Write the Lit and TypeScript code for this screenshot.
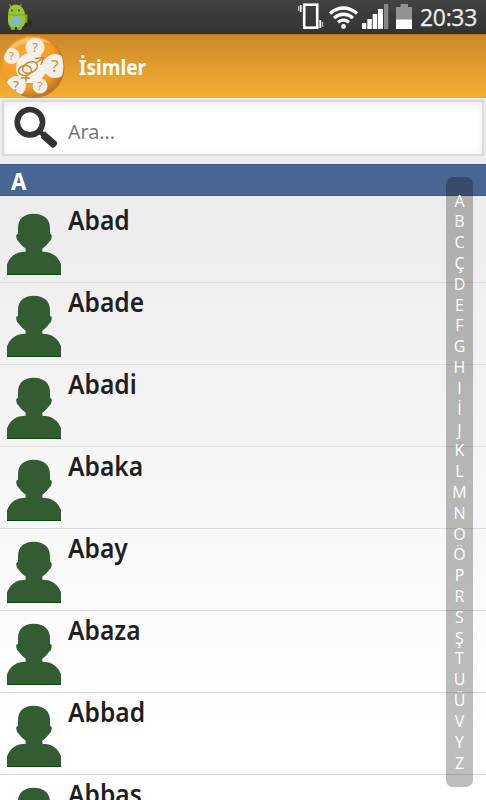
import { LitElement, html, svg, css } from "lit";
import { customElement, property } from "lit/decorators.js";

const NAMES = ["Abad", "Abade", "Abadi", "Abaka", "Abay", "Abaza", "Abbad", "Abbas"];
const LETTERS = [..."ABCÇDEFGHIİJKLMNOÖPRSŞTUÜVYZ"];

@customElement("status-bar")
class StatusBar extends LitElement {
  static styles = css`
    :host { display: flex; height: 34px; background: linear-gradient(#424242, #333); box-sizing: border-box; }
    .droid { margin: 3px 0 0 6px; }
    .icons { margin-left: auto; display: flex; }
    .time { width: 66px; font: 24px/34px "Open Sans", "Noto Sans", sans-serif; color: #eee; -webkit-text-stroke: .25px #eee; }
    .fit { display: inline-block; transform: scaleX(.955); transform-origin: 0 50%; letter-spacing: -.3px; }
  `;
  render() {
    return html`
      <svg class="droid" width="26" height="30" viewBox="0 0 26 30">
        <ellipse cx="18" cy="20" rx="8" ry="5" fill="#222" opacity=".5"/>
        <path d="M5 4L3.5 1M14 4L15.5 1" stroke="#8eb422" stroke-width="1"/>
        <rect x="17" y="11" width="4.5" height="9" rx="2" fill="#7ea51c"/>
        <rect x="4.5" y="20" width="4.5" height="7" rx="2" fill="#8bb51f"/>
        <rect x="11" y="20" width="5" height="7" rx="2" fill="#8bb51f"/>
        <path d="M2 12Q2 1.5 10 1.5Q18 2 19 12V20Q18 24 15 24H5Q2 23 2 18Z" fill="#9cc42c"/>
        <path d="M2 11.5Q10 13 19 11.5" fill="none" stroke="#789c1d" stroke-width=".8"/>
        <circle cx="6" cy="7.5" r=".9" fill="#344"/><circle cx="13" cy="7.5" r=".9" fill="#344"/>
        <path d="M5 13L10 15L14 13L15 17L14 22L9 21L5 23L4 20L7 18Z" fill="#77b5f3"/>
      </svg>
      <svg class="icons" width="122" height="34" viewBox="298 0 122 34">
        <g fill="none" stroke="#fff">
          <rect x="304.2" y="4.7" width="13" height="23" stroke-width="2.6"/>
          <path d="M300.7 5V12M320.3 20V28" stroke-width="1.8"/>
          <path d="M298.5 6V11M322.6 22V27" stroke-width="1.2" stroke="#bbb"/>
          <path d="M330 13.5Q343.5 2.5 357 13.5M334 18Q343.5 10.5 353 18M338 22.2Q343.5 18 349 22.2" stroke-width="3.3"/>
        </g>
        <circle cx="343.5" cy="26.5" r="2.4" fill="#fff"/>
        <path d="M362 23h4.3v6h-4.3zM367.3 19h4.5v10h-4.5zM372.7 14h4.5v15h-4.5zM378 9h5v20h-5z" fill="#fff"/>
        <path d="M384 4h4.3v25H384z" fill="#888"/>
        <path d="M396 7h4.5V4h7.5v3h4v13h-16z" fill="#929292"/>
        <path d="M396 19.5h16V29h-16z" fill="#fff"/>
      </svg>
      <div class="time"><span class="fit">20:33</span></div>
    `;
  }
}

@customElement("title-bar")
class TitleBar extends LitElement {
  static styles = css`
    :host { display: flex; align-items: center; height: 64px; background: linear-gradient(#ca8a2c, #f7ae30); box-sizing: border-box; border-top: 1px solid #b87412; }
    .logo { flex: none; margin-right: 13px; }
    .title { font: 700 22px/30px "Noto Sans", sans-serif; color: #fff; white-space: nowrap; transform: scaleX(.87); transform-origin: 0 50%; margin-top: -2px; }
    .q { font-family: "Noto Sans", sans-serif; fill: #d98a2b; text-anchor: middle; }
  `;
  render() {
    const bubbles = [[35, 12.5, 9.5, 13], [11.5, 21, 8, 11.5], [55, 31, 12, 17], [16, 51, 10, 14], [40, 51, 7.5, 11]];
    return html`
      <svg class="logo" width="66" height="63" viewBox="0 0 66 63">
        <defs>
          <radialGradient id="orb" cx=".42" cy=".4" r=".62">
            <stop offset="0" stop-color="#ffac38"/><stop offset=".72" stop-color="#f79c22"/><stop offset="1" stop-color="#b87520"/>
          </radialGradient>
          <clipPath id="disc"><circle cx="33" cy="31.5" r="30.5"/></clipPath>
        </defs>
        <circle cx="34" cy="32.5" r="30.5" fill="#98662a" opacity=".65"/>
        <circle cx="32.5" cy="31.5" r="30.5" fill="url(#orb)"/>
        <path d="M5 20Q14 3 33 2.5Q44 3 50 8Q24 2 5 20Z" fill="#ffd79a" opacity=".6"/>
        <g clip-path="url(#disc)">
          <path d="M30 19L18 25L17 28L18 36L20 44L26 48L35 48L42 42L46 37L44 28L40 19Z" fill="#f3f1ed"/>
          <circle cx="31" cy="33" r="15" fill="#f5f3f0"/>
          ${bubbles.map(([x, y, r, s]) => svg`
            <circle cx=${x} cy=${y} r=${r} fill="#f1eeec"/>
            <text class="q" x=${x} y=${y + s * 0.37} font-size=${s}>?</text>`)}
        </g>
        <g fill="none" stroke="#dc8526" stroke-width="1.5">
          <ellipse cx="30" cy="32.5" rx="7.8" ry="5.2" transform="rotate(-25 30 32.5)"/>
          <ellipse cx="25" cy="35.5" rx="6.5" ry="5" transform="rotate(-8 25 35.5)"/>
          <path d="M35.5 28.5L43 23M35 23.5L43.5 22.5L41 30M26 40.5V46.500M21 43H30"/>
        </g>
      </svg>
      <div class="title">İsimler</div>
    `;
  }
}

@customElement("search-box")
class SearchBox extends LitElement {
  static styles = css`
    :host { display: block; height: 66px; padding: 2px 2px 8px; box-sizing: border-box; background: #ededed; }
    .field { display: flex; height: 56px; box-sizing: border-box; border: 2px solid #d8dadb; background: #fff; box-shadow: inset 0 1px 6px #e8e8e8; }
    .lens { flex: none; margin: 4px 9px 0 8px; }
    .hint { font: 20px/28px "Noto Sans", sans-serif; color: #777; margin-top: 16px; transform: scaleX(.98); transform-origin: 0 50%; }
  `;
  render() {
    return html`<div class="field">
      <svg class="lens" width="47" height="46" viewBox="12 106 47 46">
        <circle cx="29.9" cy="122.2" r="12.7" fill="none" stroke="#333" stroke-width="5.6"/>
        <path d="M38 130L43 134.5" stroke="#333" stroke-width="4.6"/>
        <path d="M41.6 132.7L45 131.6L56.500 141.6Q58 143.2 56.800 144.8L54.600 147.2Q53 148.3 51.500 147.200L41 138Z" fill="#333"/>
      </svg>
      <div class="hint">Ara...</div>
    </div>`;
  }
}

@customElement("name-row")
class NameRow extends LitElement {
  @property() name = "";
  static styles = css`
    :host { display: flex; height: 82px; box-sizing: border-box; border-bottom: 1px solid #dcdcdc; flex: none; }
    .avatar { flex: none; margin: 12px 7px 0; }
    .name { font: 600 27px/36px "Noto Sans", sans-serif; color: #1f1f1f; white-space: nowrap; transform: scaleX(.91); transform-origin: 0 50%; height: 36px; margin-top: 1px; }
  `;
  render() {
    return html`
      <svg class="avatar" width="54" height="62" viewBox="0 0 162 186">
        <path d="M80 2C110 2 129 18 129 44V62Q136 64 134 73Q133 82 128 85Q120 98 106 107V116Q148 116 162 154V186H0V154Q14 116 56 116V107Q42 98 34 85Q29 82 28 73Q26 64 33 62V44C33 18 50 2 80 2Z" fill="#335c33"/>
        <path d="M0 184.5H162" stroke="#064a0a" stroke-width="3"/>
      </svg>
      <div class="name">${this.name}</div>
    `;
  }
}

@customElement("letter-index")
class LetterIndex extends LitElement {
  static styles = css`
    :host { display: flex; flex-direction: column; width: 27px; height: 610px; padding-top: 13.6px; box-sizing: border-box; border-radius: 7px; background: rgba(0, 0, 0, .26); }
    .letter { height: 20.815px; font: 16px/20.8px "Open Sans", "Noto Sans", sans-serif; text-align: center; color: #fff; }
  `;
  render() {
    return LETTERS.map((l) => html`<div class="letter">${l}</div>`);
  }
}

@customElement("app-root")
class AppRoot extends LitElement {
  static styles = css`
    :host { display: flex; flex-direction: column; position: relative; width: 486px; height: 800px; overflow: hidden; background: #fff; }
    status-bar, title-bar, search-box { flex: none; }
    .section { flex: none; height: 32px; box-sizing: border-box; padding-left: 11px; border-top: 1px solid #405d91; border-bottom: 1px solid #3b5b9b; background: #496592; color: #fff; font: 700 24px/32px "Noto Sans", sans-serif; }
    .cap { display: inline-block; transform: scaleX(.93); transform-origin: 0 50%; }
    .list { flex: 1; min-height: 0; overflow: hidden; display: flex; flex-direction: column; padding-top: 5px; background: linear-gradient(#ececec, #fff 88%); }
    .index { position: absolute; left: 446px; top: 177px; }
  `;
  render() {
    return html`
      <status-bar></status-bar>
      <title-bar></title-bar>
      <search-box></search-box>
      <div class="section"><span class="cap">A</span></div>
      <div class="list">${NAMES.map((n) => html`<name-row .name=${n}></name-row>`)}</div>
      <letter-index class="index"></letter-index>
    `;
  }
}
